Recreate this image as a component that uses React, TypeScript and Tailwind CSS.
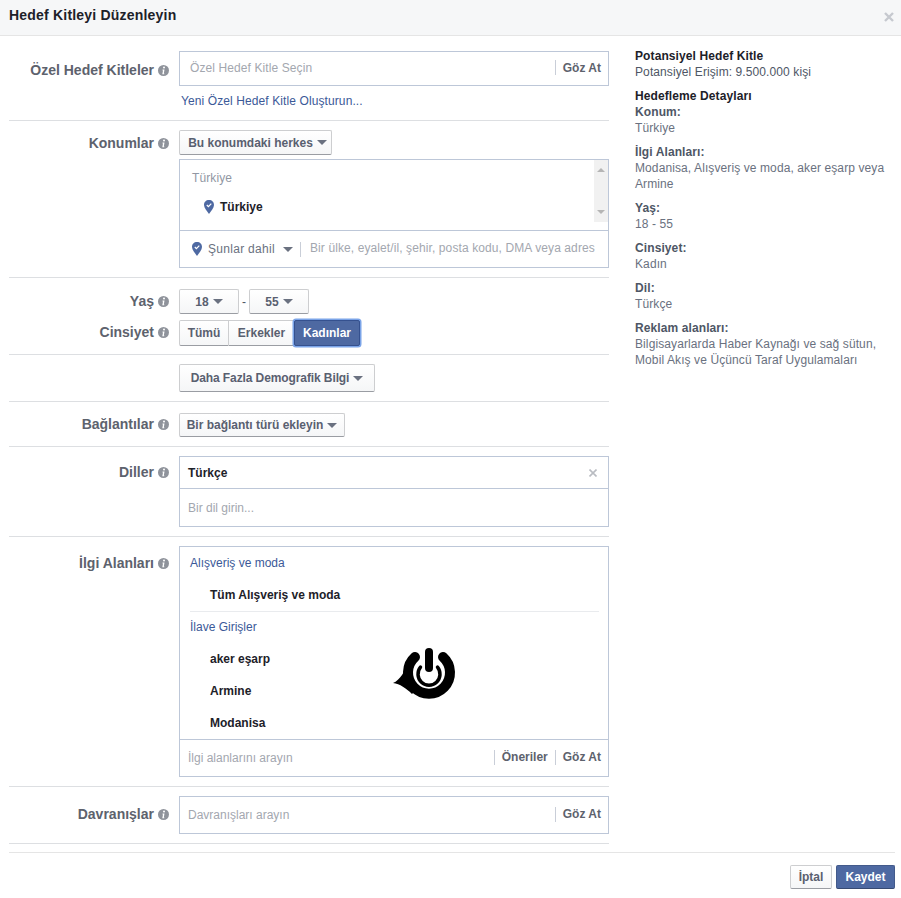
import type { ReactNode } from "react";

function Info() {
  return (
    <svg width="11" height="11" viewBox="0 0 11 11" className="shrink-0">
      <circle cx="5.5" cy="5.5" r="5.5" fill="#8f939b" />
      <circle cx="6" cy="2.6" r="1" fill="#fff" />
      <path d="M4.6 4.6h1.9L5.8 8.4h.6l-.2.8H4.3l.7-3.8h-.6z" fill="#fff" />
    </svg>
  );
}

function Caret({ color = "#6a7180" }: { color?: string }) {
  return (
    <svg width="10" height="5" viewBox="0 0 10 5" className="shrink-0">
      <path d="M0 0h10L5 5z" fill={color} />
    </svg>
  );
}

function Pin() {
  return (
    <svg width="10" height="14" viewBox="0 0 10 14" className="shrink-0">
      <path d="M5 0C2 0 0 2 0 5c0 3 3 6 5 9 2-3 5-6 5-9 0-3-2-5-5-5z" fill="#4e69a2" />
      <path d="M2.8 5l1.6 1.7L7.3 3.6" fill="none" stroke="#fff" strokeWidth="1.2" />
    </svg>
  );
}

function Logo() {
  return (
    <svg width="110" height="80" viewBox="0 0 110 80" className="absolute left-[190px] top-[83px]">
      <path d="M23 53C30 50 35 42 38 31L46 60L42 64C36 58 30 54 23 53Z" fill="#000" />
      <path d="M45 27A21 21 0 1 0 73 27" fill="none" stroke="#000" strokeWidth="10" strokeLinecap="round" />
      <path d="M50.5 37.2A11 11 0 1 0 67.5 37.2" fill="none" stroke="#000" strokeWidth="3.5" strokeLinecap="round" />
      <rect x="55" y="18" width="8" height="24" rx="4" fill="#000" />
    </svg>
  );
}

function FbButton({ children, className = "" }: { children: ReactNode; className?: string }) {
  return (
    <div className={`flex items-center justify-center gap-[4px] border border-[#cdced0] border-b-[#9a9da3] rounded-[2px] bg-gradient-to-b from-[#fff] to-[#f5f6f7] text-[12px] font-bold text-[#596070] ${className}`}>
      {children}
    </div>
  );
}

function Sep() {
  return <span className="block w-px h-[15px] bg-[#c9ced8]" />;
}

function Section({ label, children, className = "", labelClass = "" }: { label?: string; children: ReactNode; className?: string; labelClass?: string }) {
  return (
    <section className={`flex border-b border-[#dddfe2] ${className}`}>
      <RowLabel label={label} className={labelClass} />
      <div className="ml-[10px] w-[430px]">{children}</div>
    </section>
  );
}

function RowLabel({ label, className = "" }: { label?: string; className?: string }) {
  return (
    <div className={`w-[160px] h-[24px] flex items-center justify-end gap-[4px] ${className}`}>
      {label && (
        <>
          <span className="text-[14px] font-bold text-[#5d626d] whitespace-nowrap">{label}</span>
          <Info />
        </>
      )}
    </div>
  );
}

function Browse() {
  return (
    <div className="flex items-center gap-[7px] pr-[7px] -mt-[2px]">
      <Sep />
      <span className="text-[12px] font-bold text-[#5d626d]">Göz At</span>
    </div>
  );
}

function Summary({ title, children }: { title: string; children: ReactNode }) {
  return (
    <div className="mb-[8px]">
      <div className="font-bold text-[#4e5665]">{title}</div>
      <div className="text-[#6a7180]">{children}</div>
    </div>
  );
}

export default function App() {
  return (
    <div className="w-[901px] h-[898px] bg-white font-['Liberation_Sans',sans-serif] overflow-hidden">
      <header className="h-[36px] flex items-center justify-between pl-[9px] pr-[7px] bg-[#f6f7f8] border-b border-[#e5e5e5]">
        <h1 className="text-[14px] tracking-[0.2px] font-bold text-[#1d2129] -mt-[4px]">Hedef Kitleyi Düzenleyin</h1>
        <svg width="10" height="10" viewBox="0 0 10 10" className="-mt-[1px]">
          <path d="M1 1l8 8M9 1l-8 8" stroke="#c6c9cf" strokeWidth="2.4" />
        </svg>
      </header>

      <div className="flex pl-[9px]">
        <div className="w-[600px] shrink-0">
          <Section label="Özel Hedef Kitleler" className="pt-[15px] h-[85px]" labelClass="mt-[7px]">
            <div className="h-[35px] border border-[#bdc7d8] flex items-center justify-between pl-[10px]">
              <span className="text-[12px] tracking-[0.1px] text-[#a3a7af] -mt-[2px]">Özel Hedef Kitle Seçin</span>
              <Browse />
            </div>
            <div className="mt-[6px] pl-[2px] text-[12px] tracking-[0.1px] text-[#3b5998]">Yeni Özel Hedef Kitle Oluşturun...</div>
          </Section>

          <Section label="Konumlar" className="pt-[9px] pb-[9px]" labelClass="mt-[1px]">
            <FbButton className="w-[153px] h-[25px] pl-[4px]">
              Bu konumdaki herkes <Caret />
            </FbButton>
            <div className="mt-[4px] h-[109px] border border-[#bdc7d8]">
              <div className="relative h-[71px] border-b border-[#bdc7d8]">
                <div className="pl-[12px] pt-[9px] text-[12px] tracking-[0.1px] text-[#9197a3]">Türkiye</div>
                <div className="mt-[11px] pl-[24px] flex items-center gap-[6px] text-[12px] font-bold text-[#1d2129]">
                  <Pin /> Türkiye
                </div>
                <div className="absolute right-0 top-0 w-[14px] h-[62px] bg-[#f1f1f1] flex flex-col items-center justify-between py-[8px]">
                  <span className="w-0 h-0 border-x-[4px] border-x-transparent border-b-[4px] border-b-[#b5b5b5]" />
                  <span className="w-0 h-0 border-x-[4px] border-x-transparent border-t-[4px] border-t-[#b5b5b5]" />
                </div>
              </div>
              <div className="h-[36px] flex items-center pl-[12px] text-[12px] tracking-[0.1px]">
                <Pin />
                <span className="ml-[6px] tracking-[0.3px] text-[#6a7180] font-normal">Şunlar dahil</span>
                <span className="ml-[8px]"><Caret /></span>
                <span className="ml-[7px]"><Sep /></span>
                <span className="ml-[9px] w-[287px] overflow-hidden whitespace-nowrap text-[#a3a7af] -mt-[3px]">
                  Bir ülke, eyalet/il, şehir, posta kodu, DMA veya adres girin
                </span>
              </div>
            </div>
          </Section>

          <section className="border-b border-[#dddfe2] pt-[11px] pb-[8px]">
            <div className="flex">
              <RowLabel label="Yaş" />
              <div className="ml-[10px] flex items-center">
                <FbButton className="w-[60px] h-[25px]">18 <Caret /></FbButton>
                <span className="w-[10px] text-center text-[12px] text-[#4e5665]">-</span>
                <FbButton className="w-[60px] h-[25px]">55 <Caret /></FbButton>
              </div>
            </div>
            <div className="flex mt-[6px]">
              <RowLabel label="Cinsiyet" />
              <div className="ml-[10px] flex h-[26px]">
                <FbButton className="w-[50px] rounded-r-none">Tümü</FbButton>
                <FbButton className="w-[65px] rounded-none border-l-0 border-r-0">Erkekler</FbButton>
                <div className="w-[66px] flex items-center justify-center rounded-[2px] bg-[#4e69a2] border border-[#35518f] text-[12px] font-bold text-white shadow-[0_0_0_1.5px_#7ba4e8]">
                  Kadınlar
                </div>
              </div>
            </div>
          </section>

          <Section className="pt-[9px] pb-[9px]">
            <FbButton className="w-[196px] h-[28px] tracking-[-0.1px]">
              Daha Fazla Demografik Bilgi <Caret />
            </FbButton>
          </Section>

          <Section label="Bağlantılar" className="pt-[11px] pb-[9px]" labelClass="-mt-[1px]">
            <FbButton className="w-[166px] h-[24px]">
              Bir bağlantı türü ekleyin <Caret />
            </FbButton>
          </Section>

          <Section label="Diller" className="pt-[9px] pb-[9px]" labelClass="mt-[4px]">
            <div className="h-[71px] border border-[#bdc7d8] text-[12px]">
              <div className="h-[32px] flex items-center justify-between pl-[8px] pr-[11px] border-b border-[#bdc7d8] font-bold text-[#1d2129]">
                Türkçe
                <svg width="8" height="8" viewBox="0 0 8 8">
                  <path d="M.5.5l7 7M7.5.5l-7 7" stroke="#b9bcc2" strokeWidth="1.6" />
                </svg>
              </div>
              <div className="pl-[8px] pt-[10px] text-[#a3a7af]">Bir dil girin...</div>
            </div>
          </Section>

          <Section label="İlgi Alanları" className="pt-[9px] pb-[9px]" labelClass="mt-[5px]">
            <div className="relative h-[231px] border border-[#bdc7d8] text-[12px]">
              <div className="h-[193px] border-b border-[#bdc7d8]">
                <div className="h-[32px] flex items-center pl-[10px] text-[#3b5998]">Alışveriş ve moda</div>
                <div className="ml-[10px] mr-[9px] h-[32px] pl-[20px] flex items-center border-b border-[#e9ebee] font-bold text-[#1d2129] box-content">
                  Tüm Alışveriş ve moda
                </div>
                <div className="h-[30px] flex items-center pl-[10px] text-[#3b5998]">İlave Girişler</div>
                <div className="h-[32px] flex items-center pl-[30px] font-bold text-[#1d2129] mt-[1px]">aker eşarp</div>
                <div className="h-[32px] flex items-center pl-[30px] font-bold text-[#1d2129]">Armine</div>
                <div className="h-[32px] flex items-center pl-[30px] font-bold text-[#1d2129]">Modanisa</div>
              </div>
              <div className="h-[36px] flex items-center pl-[8px]">
                <span className="text-[#a3a7af]">İlgi alanlarını arayın</span>
                <div className="ml-auto flex items-center gap-[7px] pr-[7px] -mt-[2px]">
                  <Sep />
                  <span className="font-bold text-[#5d626d]">Öneriler</span>
                </div>
                <Browse />
              </div>
              <Logo />
            </div>
          </Section>

          <Section label="Davranışlar" className="pt-[9px] pb-[9px]" labelClass="mt-[6px]">
            <div className="h-[38px] border border-[#bdc7d8] flex items-center justify-between pl-[8px]">
              <span className="text-[12px] text-[#a3a7af]">Davranışları arayın</span>
              <Browse />
            </div>
          </Section>
        </div>

        <aside className="ml-[26px] pt-[12px] w-[256px] text-[12px] tracking-[0.1px] leading-[16px]">
          <div className="mb-[8px]">
            <div className="font-bold text-[#1d2129]">Potansiyel Hedef Kitle</div>
            <div className="text-[#4e5665]">Potansiyel Erişim: 9.500.000 kişi</div>
          </div>
          <div className="font-bold text-[#1d2129]">Hedefleme Detayları</div>
          <Summary title="Konum:">Türkiye</Summary>
          <Summary title="İlgi Alanları:">Modanisa, Alışveriş ve moda, aker eşarp veya Armine</Summary>
          <Summary title="Yaş:">18 - 55</Summary>
          <Summary title="Cinsiyet:">Kadın</Summary>
          <Summary title="Dil:">Türkçe</Summary>
          <Summary title="Reklam alanları:">Bilgisayarlarda Haber Kaynağı ve sağ sütun, Mobil Akış ve Üçüncü Taraf Uygulamaları</Summary>
        </aside>
      </div>

      <footer className="mt-[8px] ml-[9px] mr-[6px] border-t border-[#e5e5e5] pt-[12px] flex justify-end gap-[4px]">
        <FbButton className="w-[42px] h-[24px]">İptal</FbButton>
        <div className="w-[59px] h-[24px] flex items-center justify-center rounded-[2px] bg-[#4e69a2] border border-[#435a8b] border-b-[#374a72] text-[12px] font-bold text-white">
          Kaydet
        </div>
      </footer>
    </div>
  );
}
